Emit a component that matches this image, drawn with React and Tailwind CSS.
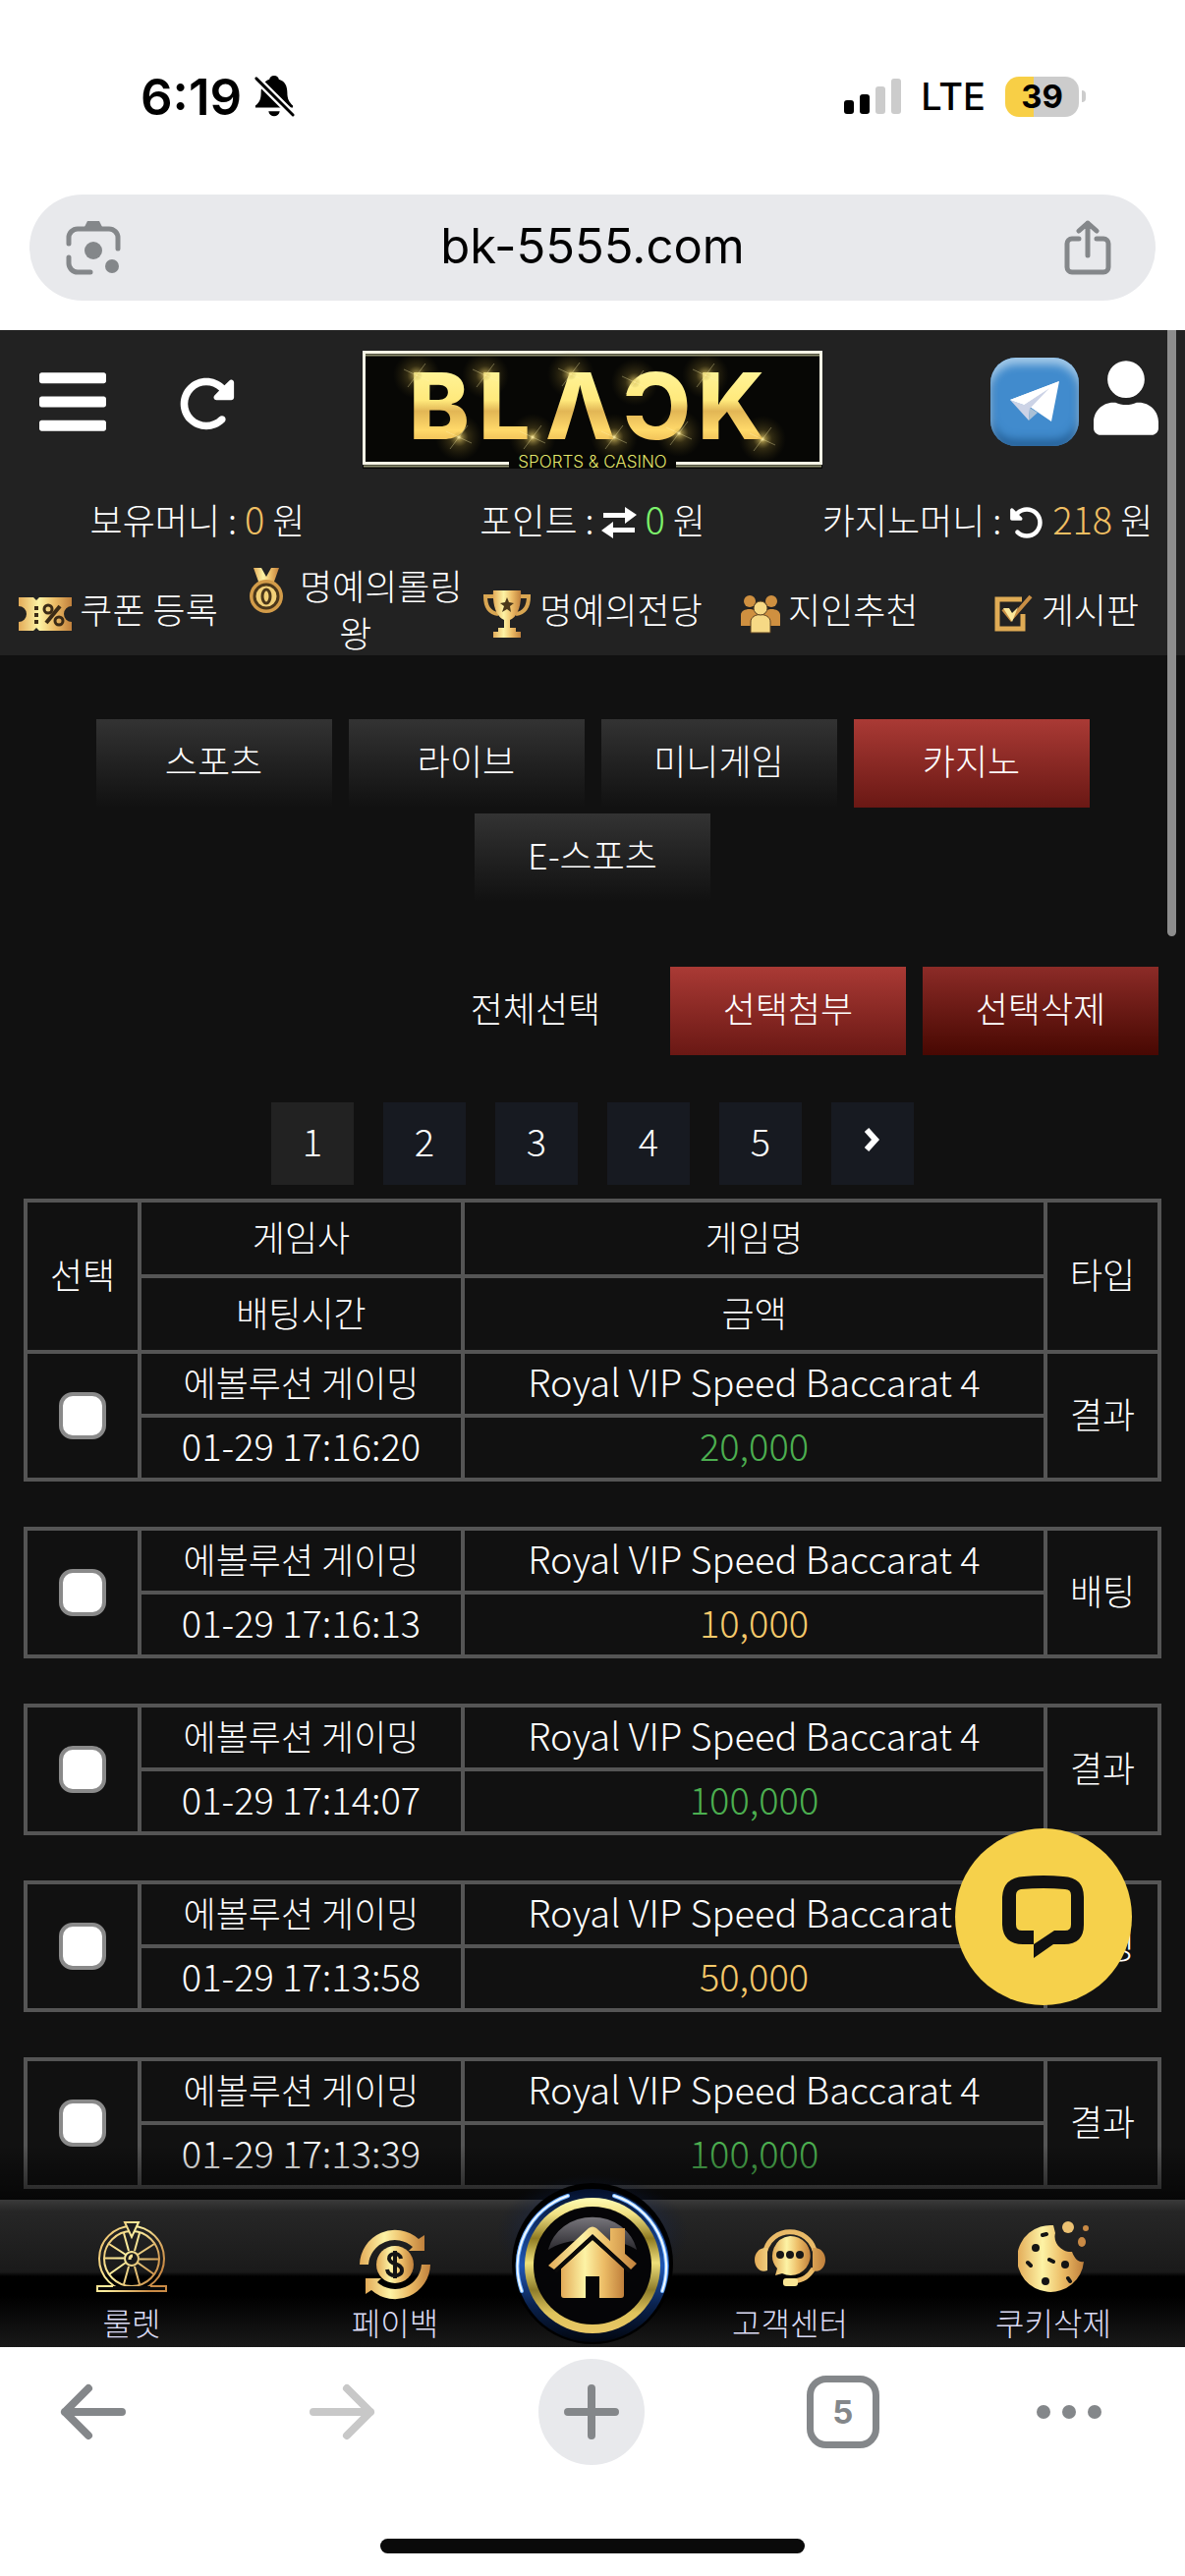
import React, { useState } from "react";
import { FaBars, FaUser } from "react-icons/fa";
import { FaRotateLeft, FaRotateRight } from "react-icons/fa6";

const tabs = ["스포츠", "라이브", "미니게임", "카지노", "E-스포츠"];

const bets = [
  { time: "01-29 17:16:20", amount: "20,000", type: "결과" },
  { time: "01-29 17:16:13", amount: "10,000", type: "배팅" },
  { time: "01-29 17:14:07", amount: "100,000", type: "결과" },
  { time: "01-29 17:13:58", amount: "50,000", type: "배팅" },
  { time: "01-29 17:13:39", amount: "100,000", type: "결과" },
];

/* Shared gradients for the gold icons */
const Gradients = () => (
  <svg className="absolute w-0 h-0" aria-hidden="true">
    <defs>
      <linearGradient id="gold" x1="0" y1="0" x2="1" y2="0">
        <stop offset="0" stopColor="#e3ab58" />
        <stop offset="0.38" stopColor="#fdf3a5" />
        <stop offset="0.68" stopColor="#ecbc66" />
        <stop offset="1" stopColor="#c0803c" />
      </linearGradient>
      <linearGradient id="goldLine" gradientUnits="userSpaceOnUse" x1="0" y1="0" x2="72" y2="40">
        <stop offset="0" stopColor="#e3ab58" />
        <stop offset="0.5" stopColor="#fdf0a0" />
        <stop offset="1" stopColor="#c98a45" />
      </linearGradient>
      <linearGradient id="ring" x1="0" y1="0" x2="0" y2="1">
        <stop offset="0" stopColor="#fffcb4" />
        <stop offset="0.12" stopColor="#f1e184" />
        <stop offset="0.3" stopColor="#8f7b22" />
        <stop offset="0.48" stopColor="#efe07a" />
        <stop offset="0.68" stopColor="#8d7c2a" />
        <stop offset="0.85" stopColor="#dfc35c" />
        <stop offset="1" stopColor="#e9c765" />
      </linearGradient>
      <linearGradient id="blueRing" x1="0" y1="0" x2="0" y2="1">
        <stop offset="0" stopColor="#04102b" />
        <stop offset="0.5" stopColor="#1f56b4" />
        <stop offset="0.75" stopColor="#0a2350" />
        <stop offset="1" stopColor="#02060f" />
      </linearGradient>
      <linearGradient id="gloss" x1="0" y1="0" x2="0" y2="1">
        <stop offset="0" stopColor="#77757b" />
        <stop offset="1" stopColor="#2b2a2f" />
      </linearGradient>
      <linearGradient id="logoText" x1="0" y1="0" x2="0" y2="1">
        <stop offset="0.15" stopColor="#fff59a" />
        <stop offset="0.45" stopColor="#ffe97c" />
        <stop offset="0.55" stopColor="#e2b655" />
        <stop offset="0.72" stopColor="#ffd96a" />
        <stop offset="0.9" stopColor="#e5b04a" />
      </linearGradient>
      <radialGradient id="spark">
        <stop offset="0" stopColor="#fffbe0" />
        <stop offset="0.12" stopColor="#e9cf6c" stopOpacity="0.6" />
        <stop offset="0.4" stopColor="#b59a3c" stopOpacity="0.25" />
        <stop offset="1" stopColor="#6b5a1c" stopOpacity="0" />
      </radialGradient>
      <radialGradient id="blueGlow">
        <stop offset="0.4" stopColor="#1c3a86" stopOpacity="0.6" />
        <stop offset="1" stopColor="#0a1530" stopOpacity="0" />
      </radialGradient>
    </defs>
  </svg>
);

const sparks = [
  [55, 25], [125, 25], [212, 24], [277, 32], [349, 25],
  [98, 88], [173, 88], [256, 88], [322, 84], [407, 90],
];

const Logo = () => (
  <svg className="w-[468px] h-[120px] overflow-visible" viewBox="0 0 468 120" role="img" aria-label="BLACK SPORTS &amp; CASINO">
    <rect width="468" height="120" fill="#070705" />
    <path d="M149 114.500H1.500V1.500h465v113H319" fill="none" stroke="#f7f6e6" strokeWidth="3" />
    <path d="M149 117.500H1M319 117.500h148M3 4.500h462" fill="none" stroke="#8f9070" strokeWidth="2" />
    {sparks.map(([x, y]) => (
      <circle key={x} cx={x} cy={y} r="24" fill="url(#spark)" />
    ))}
    <text
      x="47 118 186 265 341"
      y="90"
      fontFamily="Inter, sans-serif"
      fontWeight="800"
      fontSize="93"
      fill="url(#logoText)"
    >
      BLΛƆK
    </text>
    {sparks.map(([x, y]) => (
      <g key={x}>
        <circle cx={x} cy={y} r="6" fill="url(#spark)" />
        <path d={`M${x - 9} ${y + 12}L${x + 9} ${y - 12}M${x - 13} ${y - 6}l26 12`} stroke="#fff3b0" strokeOpacity="0.35" />
      </g>
    ))}
    <text x="234" y="119" textAnchor="middle" fontFamily="Inter, sans-serif" fontSize="17" fill="#e2e56a">
      SPORTS &amp; CASINO
    </text>
  </svg>
);

const TelegramIcon = () => (
  <span className="flex items-center justify-center w-[90px] h-[90px] rounded-[26px] bg-[#418bcd] shadow-[inset_0_7px_8px_#a3c9e8,inset_0_-7px_8px_#27639b]">
    <svg className="w-[50px] h-[42px]" viewBox="0 0 50 42">
      <path d="M0 19 50 0 42 41 20 26z" fill="#fff" />
      <path d="M0 19 14 24 40 7 20 28 19 40z" fill="#ccd3e6" />
      <path d="M0 19 50 0 40 7 14 24z" fill="#fff" />
      <path d="M19 40 20 27 28 32z" fill="#a9c0d6" />
    </svg>
  </span>
);

const TicketIcon = () => (
  <svg className="inline-block align-middle w-[54px] h-9 -my-2" viewBox="0 0 54 36">
    <path d="M0 1h15l3 3 3-3h33v9a8 8 0 0 0 0 16v9H21l-3-3-3 3H0v-9a8 8 0 0 0 0-16z" fill="url(#gold)" />
    <path d="M18 10v4M18 17v4M18 24v4" stroke="#3b2b16" strokeWidth="4" />
    <path d="M28 27 42 10" stroke="#3b2b16" strokeWidth="4" />
    <circle cx="30" cy="13" r="4" fill="none" stroke="#3b2b16" strokeWidth="3" />
    <circle cx="41" cy="25" r="4" fill="none" stroke="#3b2b16" strokeWidth="3" />
  </svg>
);

const MedalIcon = () => (
  <svg className="inline-block align-middle w-9 h-12 -my-2 mr-2" viewBox="0 0 36 48">
    <path d="M5 1h8l5 9 5-9h8l-5 14H10z" fill="url(#gold)" />
    <circle cx="18" cy="30" r="17" fill="#d39c49" />
    <circle cx="18" cy="30" r="12" fill="#f2d078" stroke="#4b371a" strokeWidth="3" />
    <ellipse cx="18" cy="30" rx="4" ry="7" fill="none" stroke="#4b371a" strokeWidth="3" />
  </svg>
);

const TrophyIcon = () => (
  <svg className="inline-block align-middle w-[50px] h-[50px] -my-2" viewBox="0 0 50 50">
    <path d="M12 7H3c0 12 5 17 13 18M38 7h9c0 12-5 17-13 18" fill="none" stroke="#d9a652" strokeWidth="4" />
    <path d="M11 1h28c1 17-4 27-11 30v8h6v4h5v6H11v-6h5v-4h6v-8C15 28 10 18 11 1z" fill="url(#gold)" />
    <path d="m25 8 2 5 5 1-4 3 1 6-4-3-5 3 2-6-4-3 5-1z" fill="#4b371a" />
  </svg>
);

const PeopleIcon = () => (
  <svg className="inline-block align-middle w-10 h-10 -my-2" viewBox="0 0 40 40">
    <g fill="#cf9040">
      <circle cx="9" cy="7" r="6" />
      <circle cx="31" cy="7" r="6" />
      <path d="M0 32V21c0-8 17-8 18 0v11zM22 32V21c1-8 18-8 18 0v11z" />
    </g>
    <path d="M10 39V28c0-10 20-10 20 0v11z" fill="#f6d985" stroke="#5a4020" />
    <circle cx="20" cy="14" r="7" fill="#f6d985" stroke="#5a4020" />
  </svg>
);

const CheckIcon = () => (
  <svg className="inline-block align-middle w-10 h-10 -my-2" viewBox="0 0 40 40">
    <path d="M29 20v15H3V5h25" fill="none" stroke="#dfab55" strokeWidth="5" />
    <path d="M9 15 17 25 37 2" fill="none" stroke="#c98f45" strokeWidth="4" />
    <path d="M9 14h6l3 5 6-6-6 15z" fill="#fae79a" />
  </svg>
);

const WheelIcon = () => (
  <svg className="w-[72px] h-[72px]" viewBox="0 0 72 72" fill="none" stroke="url(#goldLine)" strokeWidth="2">
    <circle cx="36" cy="38" r="33" />
    <circle cx="36" cy="38" r="28" />
    <path d="M9 37.500h19M44 38.500h19M28 12l5 18M44 12l-5 18M28 64l5-18M44 64l-5-18M13 23l17 11M59 23 42 34M13 54l17-12M59 54 42 42" />
    <circle cx="36" cy="38" r="7" fill="#1c1c1c" />
    <path d="M34 39c0-2 1-4 3-4" strokeWidth="3" />
    <path d="M29 1h14l-7 15z" fill="#1c1c1c" />
    <path d="M17 66H1v5h70v-5H55" fill="#0a0a0a" />
  </svg>
);

const PaybackIcon = () => (
  <svg className="w-[72px] h-[72px]" viewBox="0 0 72 72">
    <path d="M0 36A36 36 0 0 1 60 10l6-4v16H50l4-4A27 27 0 0 0 9 36z" fill="url(#gold)" />
    <path d="M72 36A36 36 0 0 1 12 62l-6 4V50h16l-4 4a27 27 0 0 0 45-18z" fill="url(#gold)" />
    <circle cx="36" cy="36" r="19" fill="url(#gold)" />
    <path d="M42 30c-1-7-13-6-12 0 1 7 13 4 13 12 0 7-14 7-15-1M36 22v28" fill="none" stroke="#141414" strokeWidth="4" />
  </svg>
);

const HeadsetIcon = () => (
  <svg className="w-[72px] h-[60px]" viewBox="0 0 72 60">
    <path d="M11 24a25.500 24 0 0 1 50 0M60 42c-5 8-10 12-21 13" fill="none" stroke="#e9ba68" strokeWidth="5" />
    <path d="M13 21v23C5 47 0 40 0 33s5-13 13-12zM59 21v23c8 3 13-4 13-11s-5-13-13-12z" fill="url(#gold)" />
    <path d="M36 9a20 20 0 1 1-8 38l-7 2 2-7A20 20 0 0 1 36 9z" fill="url(#gold)" />
    <rect x="29" y="52" width="15" height="8" rx="3" fill="#f9e593" />
    <g fill="#171717">
      <circle cx="26" cy="28" r="4" />
      <circle cx="36" cy="28" r="4" />
      <circle cx="46" cy="28" r="4" />
    </g>
  </svg>
);

const CookieIcon = () => (
  <svg className="w-[72px] h-[72px]" viewBox="0 0 72 72">
    <path d="M36 4a34 34 0 1 0 31 37c-5 1-9-2-12-10-9 1-20-8-17-19z" fill="url(#gold)" />
    <circle cx="51" cy="6" r="6" fill="#ecc172" />
    <circle cx="69" cy="7" r="3" fill="#c98a45" />
    <ellipse cx="65" cy="21" rx="4" ry="5" fill="#c98a45" />
    <g fill="#141414">
      <circle cx="18" cy="27" r="4" />
      <circle cx="48" cy="44" r="4" />
      <circle cx="28" cy="61" r="4" />
    </g>
    <path d="M25 14l4-1M10 42l3 3M32 39l4 2M51 58l2 3" stroke="#141414" strokeWidth="4" strokeLinecap="round" />
  </svg>
);

const HomeIcon = () => (
  <svg className="w-[200px] h-[180px]" viewBox="0 0 200 180">
    <ellipse cx="100" cy="62" rx="98" ry="60" fill="url(#blueGlow)" />
    <circle cx="100" cy="93" r="82" fill="#000" />
    <circle cx="100" cy="95" r="78" fill="url(#blueRing)" />
    <path d="M75 24A76 76 0 0 0 28 121M122 24a76 76 0 0 1 49 97" fill="none" stroke="#6fb0ff" strokeWidth="4" strokeLinecap="round" />
    <path d="M75 24A76 76 0 0 0 28 121M122 24a76 76 0 0 1 49 97" fill="none" stroke="#f3faff" strokeWidth="2" strokeLinecap="round" />
    <circle cx="100" cy="95" r="69" fill="url(#ring)" />
    <circle cx="100" cy="95" r="60" fill="#050507" />
    <path d="M55 79a46 42 0 0 1 90 0c-20-14-70-14-90 0z" fill="url(#gloss)" />
    <path d="M55 95 96 57q4-3 8 0l14 13V57h15v26l12 10-6 6-39-36-39 36z" fill="url(#gold)" />
    <path d="M68 98 100 69l32 28v28q0 3-3 3h-22v-22H93v22H71q-3 0-3-3z" fill="url(#gold)" />
    <path d="M62 101 100 66l38 35" fill="none" stroke="#0b0a0a" strokeWidth="4" />
  </svg>
);

const StatusBar = () => (
  <div className="flex items-center justify-between h-[68px] pl-[143px] pr-[101px]">
    <div className="flex items-center gap-3">
      <span className="text-[51px] leading-none font-semibold">6:19</span>
      <svg className="w-[42px] h-11" viewBox="0 0 44 44">
        <path d="M22 0c3 0 5 2 5 4 7 2 9 8 9 14 0 7 2 10 6 14v2H2v-2c5-4 6-8 6-14 0-7 3-12 9-14 0-2 2-4 5-4zM16 38h12c-1 7-11 7-12 0z" fill="#000" />
        <path d="M3 3 42 42" stroke="#fff" strokeWidth="8" />
        <path d="M3 3 42 42" stroke="#000" strokeWidth="3" strokeLinecap="round" />
      </svg>
    </div>
    <div className="flex items-center">
      <svg className="w-[58px] h-[38px]" viewBox="0 0 58 38">
        <rect x="0" y="23" width="10" height="14" rx="3" />
        <rect x="16" y="17" width="10" height="20" rx="3" />
        <rect x="32" y="9" width="10" height="28" rx="3" fill="#ccc" />
        <rect x="48" y="1" width="10" height="36" rx="3" fill="#ccc" />
      </svg>
      <span className="ml-5 text-[38px] leading-none font-medium">LTE</span>
      <div className="ml-5 flex items-center justify-center w-[75px] h-[41px] rounded-[14px] bg-linear-to-r from-[#f8cf46] from-39% to-[#ccc] to-39% text-[33px] leading-none font-bold">
        39
      </div>
      <span className="ml-[3px] w-1 h-3 rounded-r-full bg-[#ccc]" />
    </div>
  </div>
);

const AddressBar = () => (
  <div className="flex items-center justify-between h-[108px] mt-[66px] mx-[30px] pl-[37px] pr-[45px] rounded-full bg-[#e8e9ec]">
    <button aria-label="Lens">
      <svg className="w-14 h-14" viewBox="0 0 56 56" fill="none" stroke="#84878a" strokeWidth="5" strokeLinecap="round">
        <path d="M3 24V18a9 9 0 0 1 9-9h32a9 9 0 0 1 9 9v11M3 38v6a9 9 0 0 0 9 9h13" />
        <path d="M19 7l3-6h12l3 6z" fill="#84878a" stroke="none" />
        <circle cx="28" cy="31" r="9" fill="#84878a" stroke="none" />
        <circle cx="47" cy="47" r="7" fill="#84878a" stroke="none" />
      </svg>
    </button>
    <span className="pb-1 text-[49px] leading-none">bk-5555.com</span>
    <button aria-label="Share">
      <svg className="w-12 h-14" viewBox="0 0 48 56" fill="none" stroke="#84878a" strokeWidth="5" strokeLinecap="round" strokeLinejoin="round">
        <path d="M15 19H8a5 5 0 0 0-5 5v24a5 5 0 0 0 5 5h32a5 5 0 0 0 5-5V24a5 5 0 0 0-5-5h-7M24 36V3M15 11l9-8 9 8" />
      </svg>
    </button>
  </div>
);

const Header = () => (
  <header className="bg-[#222] pt-[21px]">
    <div className="flex items-center justify-between px-[27px]">
      <div className="flex flex-1 items-center gap-[72px] pb-4">
        <button aria-label="Menu" className="ml-[13px]">
          <FaBars className="w-[68px] h-[78px]" />
        </button>
        <button aria-label="Refresh" className="pt-1">
          <FaRotateRight className="w-[60px] h-[60px]" />
        </button>
      </div>
      <Logo />
      <div className="flex flex-1 items-center justify-end gap-[15px] pb-4">
        <a href="#telegram" aria-label="Telegram">
          <TelegramIcon />
        </a>
        <button aria-label="My page" className="pb-2">
          <FaUser className="w-[66px] h-[76px]" />
        </button>
      </div>
    </div>

    {/* Balances */}
    <div className="grid grid-cols-3 mt-[27px] text-center leading-[48px]">
      <p>
        보유머니 : <span className="text-[38px] text-[#f0bf62]">0</span> 원
      </p>
      <p>
        포인트 :{" "}
        <button aria-label="포인트 전환" className="align-middle mb-1">
          <svg className="w-9 h-8" viewBox="0 0 36 32" fill="#fff">
            <path d="M2 6h22V0l12 8-12 9v-6H2zM34 21H12v-6L0 24l12 8v-6h22z" />
          </svg>
        </button>{" "}
        <span className="text-[38px] text-[#7df46c]">0</span> 원
      </p>
      <p>
        카지노머니 :{" "}
        <button aria-label="머니 회수" className="align-middle mb-1">
          <FaRotateLeft className="w-9 h-9" />
        </button>{" "}
        <span className="text-[38px] text-[#f0bf62]">218</span> 원
      </p>
    </div>

    {/* Shortcut menu */}
    <nav className="grid grid-cols-5 items-center mt-[17px] text-center leading-[48px]">
      <a href="#coupon"><TicketIcon /> 쿠폰 등록</a>
      <a href="#rolling" className="px-2 break-all"><MedalIcon /> 명예의롤링왕</a>
      <a href="#fame"><TrophyIcon /> 명예의전당</a>
      <a href="#friend"><PeopleIcon /> 지인추천</a>
      <a href="#board"><CheckIcon /> 게시판</a>
    </nav>
  </header>
);

const cell = "border-4 border-[#555] p-0 pb-1.5 font-light";

const BetTable = () => (
  <div className="mx-6 mt-[14px]">
    <table className="w-full table-fixed border-collapse text-center leading-[48px]">
      <colgroup>
        <col className="w-[116px]" />
        <col className="w-[329px]" />
        <col />
        <col className="w-[116px]" />
      </colgroup>
      <thead>
        <tr className="h-[77px]">
          <th rowSpan={2} className={cell}>선택</th>
          <th className={cell}>게임사</th>
          <th className={cell}>게임명</th>
          <th rowSpan={2} className={cell}>타입</th>
        </tr>
        <tr className="h-[77px]">
          <th className={cell}>배팅시간</th>
          <th className={cell}>금액</th>
        </tr>
      </thead>
      {bets.map((bet, i) => (
        <tbody key={bet.time}>
          {i > 0 && (
            <tr className="h-[50px]">
              <td colSpan={4} className="p-0" />
            </tr>
          )}
          <tr className="h-[65px]">
            <td rowSpan={2} className="border-4 border-[#555] p-0">
              <input
                type="checkbox"
                aria-label={`${bet.time} 선택`}
                className="block mx-auto w-12 h-12 appearance-none rounded-[14px] border-4 border-[#8a8a8a] bg-white checked:bg-[#a33530]"
              />
            </td>
            <td className={cell}>에볼루션 게이밍</td>
            <td className={`${cell} text-[38px]`}>Royal VIP Speed Baccarat 4</td>
            <td rowSpan={2} className={cell}>{bet.type}</td>
          </tr>
          <tr className="h-[65px]">
            <td className={`${cell} text-[38px]`}>{bet.time}</td>
            <td className={`${cell} text-[38px] ${bet.type === "결과" ? "text-[#4caf50]" : "text-[#f5c96b]"}`}>
              {bet.amount}
            </td>
          </tr>
        </tbody>
      ))}
    </table>
  </div>
);

const navLink = "flex flex-[2] flex-col items-center justify-end pb-2";

const BottomNav = () => (
  <nav className="relative flex h-[150px] mt-[11px] bg-linear-[180deg,#3a3a3a_0%,#262626_8%,#1a1a1a_49%,#000_52%,#000_65%,#191919_100%] text-[32px] leading-9 text-[#dcdcf5]">
    <div className="absolute inset-x-0 bottom-full h-14 bg-linear-to-b from-transparent to-black/60" />
    <a href="#roulette" className={navLink}>
      <span className="flex h-[84px] items-start"><WheelIcon /></span>
      룰렛
    </a>
    <a href="#payback" className={navLink}>
      <span className="flex h-[84px] items-end pb-1"><PaybackIcon /></span>
      페이백
    </a>
    <a href="#home" aria-label="홈" className="relative flex-1">
      <span className="absolute left-1/2 -top-7 -translate-x-1/2 w-[200px]">
        <HomeIcon />
      </span>
    </a>
    <a href="#support" className={navLink}>
      <span className="flex h-[84px] items-start pt-1.5"><HeadsetIcon /></span>
      고객센터
    </a>
    <a href="#cookie" className={navLink}>
      <span className="flex h-[84px] items-start"><CookieIcon /></span>
      쿠키삭제
    </a>
  </nav>
);

const BrowserBar = () => (
  <footer className="flex flex-col items-center bg-white">
    <div className="flex w-full items-center justify-between h-[132px] px-[61px]">
      <button aria-label="Back">
        <svg className="w-[68px] h-[58px]" viewBox="0 0 68 58" fill="none" stroke="#84878a" strokeWidth="8" strokeLinecap="round" strokeLinejoin="round">
          <path d="M63 29H5M29 5 5 29l24 24" />
        </svg>
      </button>
      <button aria-label="Forward" className="ml-[84px]">
        <svg className="w-[68px] h-[58px]" viewBox="0 0 68 58" fill="none" stroke="#c8c8c8" strokeWidth="8" strokeLinecap="round" strokeLinejoin="round">
          <path d="M5 29h58M39 5l24 24-24 24" />
        </svg>
      </button>
      <button aria-label="New tab" className="flex items-center justify-center w-[108px] h-[108px] mx-[64px] rounded-full bg-[#e8e9ec]">
        <svg className="w-14 h-14" viewBox="0 0 56 56" stroke="#84878a" strokeWidth="8" strokeLinecap="round">
          <path d="M28 4v48M4 28h48" />
        </svg>
      </button>
      <button className="flex items-center justify-center w-[74px] h-[74px] mr-[59px] rounded-[20px] border-[7px] border-[#84878a] font-['Inter',sans-serif] text-[33px] leading-none font-bold text-[#84878a]">
        5
      </button>
      <button aria-label="More" className="flex gap-3 pr-6">
        <span className="w-3.5 h-3.5 rounded-full bg-[#84878a]" />
        <span className="w-3.5 h-3.5 rounded-full bg-[#84878a]" />
        <span className="w-3.5 h-3.5 rounded-full bg-[#84878a]" />
      </button>
    </div>
    <div className="mt-[63px] mb-6 w-[432px] h-[15px] rounded-full bg-[#0a0a0a]" />
  </footer>
);

const App = () => {
  const [tab, setTab] = useState("카지노");
  const [page, setPage] = useState(1);

  return (
    <div className="min-h-screen bg-white">
      <Gradients />

      <div className="pt-16 pb-[30px] font-['Inter',sans-serif] text-black">
        <StatusBar />
        <AddressBar />
      </div>

      <div className="relative bg-[#111] font-['Noto_Sans_CJK_KR',sans-serif] font-light text-[36px] text-white">
        <Header />

        {/* Game tabs */}
        <div className="flex flex-wrap justify-center gap-x-[17px] gap-y-1.5 pt-[65px] px-20">
          {tabs.map((name) => (
            <button
              key={name}
              onClick={() => setTab(name)}
              className={`w-60 h-[90px] pb-2 bg-linear-to-b ${
                tab === name ? "from-[#aa3a35] to-[#6a1814]" : "from-[#333] to-[#111]"
              }`}
            >
              {name}
            </button>
          ))}
        </div>

        <div className="flex justify-end gap-[17px] mt-[66px] pr-[27px]">
          <button className="w-60 h-[90px] pb-2">전체선택</button>
          <button className="w-60 h-[90px] pb-2 bg-linear-to-b from-[#aa3a35] to-[#6a1814]">선택첨부</button>
          <button className="w-60 h-[90px] pb-2 bg-linear-to-b from-[#8c2b27] to-[#480803]">선택삭제</button>
        </div>

        {/* Pagination */}
        <div className="flex justify-center gap-[30px] mt-12">
          {[1, 2, 3, 4, 5].map((n) => (
            <button
              key={n}
              onClick={() => setPage(n)}
              className={`w-[84px] h-[84px] pb-2 text-[38px] ${page === n ? "bg-[#222]" : "bg-[#171a21]"}`}
            >
              {n}
            </button>
          ))}
          <button aria-label="Next" className="flex items-center justify-center w-[84px] h-[84px] pb-2 bg-[#171a21]">
            <svg className="w-4 h-6" viewBox="0 0 16 24" fill="none" stroke="#fff" strokeWidth="6">
              <path d="M2 2l9 10-9 10" />
            </svg>
          </button>
        </div>

        <BetTable />
        <BottomNav />

        {/* Scroll thumb */}
        <div className="absolute top-0 right-[9px] w-[9px] h-[617px] rounded-b-full bg-[#8d8d8d]" />

        {/* Live chat */}
        <button aria-label="Chat" className="absolute right-[54px] bottom-[348px] flex items-center justify-center w-[180px] h-[180px] rounded-full bg-[#f6d14b]">
          <svg className="w-[84px] h-[84px]" viewBox="0 0 84 84">
            <path
              d="M22 1q20-2 40 0 21 1 21 21v28q0 20-20 20H52L32 84V70H21Q1 70 0 50V22Q1 2 22 1zM19 14q-5 1-5 6v30q0 6 6 6h12v14L53 56h11q6 0 6-6V20q0-6-6-6-22-2-45 0z"
              fill="#111"
              fillRule="evenodd"
            />
          </svg>
        </button>
      </div>

      <BrowserBar />
    </div>
  );
};

export default App;
